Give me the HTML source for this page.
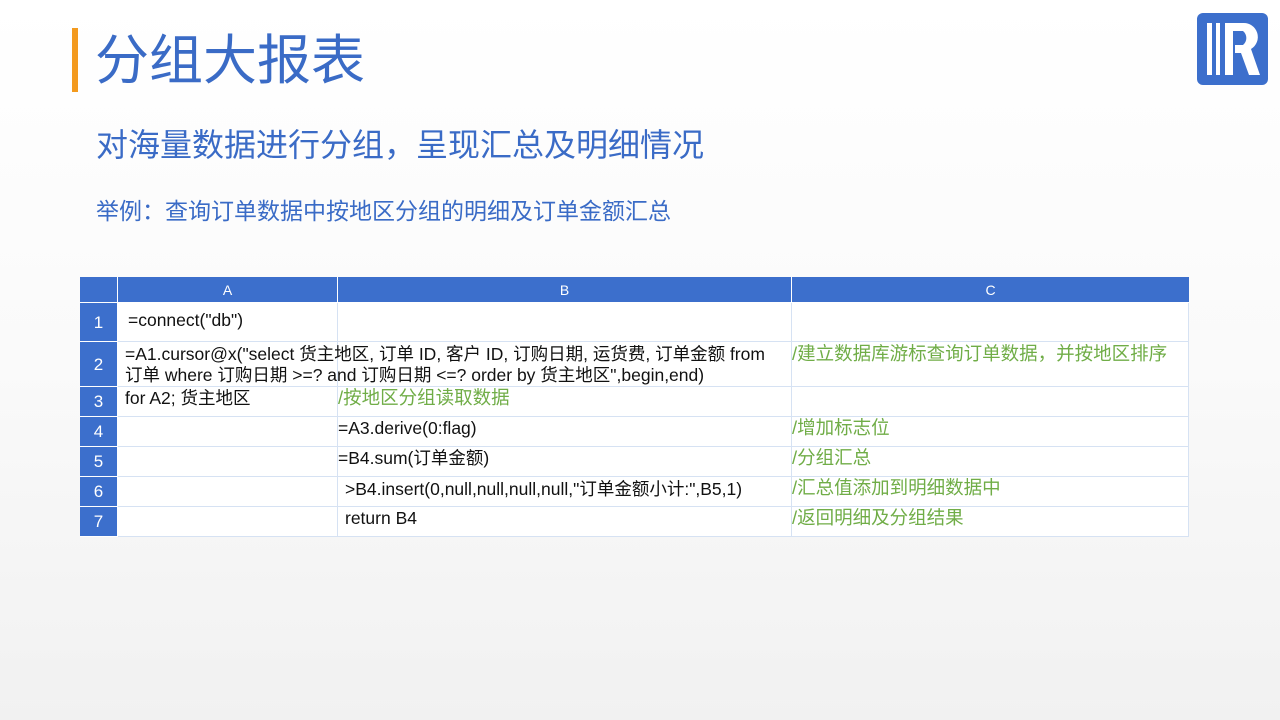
<!DOCTYPE html>
<html><head><meta charset="utf-8"><style>
*{margin:0;padding:0;box-sizing:border-box}
body{width:1280px;height:720px;overflow:hidden;position:relative;background:linear-gradient(180deg,#ffffff 0%,#fafafa 50%,#f1f1f1 100%);font-family:"Liberation Sans","Noto Sans CJK SC",sans-serif}
.a{position:absolute;white-space:nowrap}
.c{position:absolute;border-right:1px solid #d6e2f3;border-bottom:1px solid #d6e2f3;background:#fff}
.h{position:absolute;background:#3c6fcc;color:#fff;text-align:center;border-right:1px solid #fff;border-bottom:1px solid #fff;font-size:14px}
.t{position:absolute;font-size:17.5px;color:#111;white-space:nowrap;line-height:21px}
.g{color:#70ad47;font-size:18.5px}
</style></head><body>
<div class="a" style="left:72px;top:28px;width:6px;height:64px;background:#f39a1e"></div>
<div class="a" style="left:95px;top:28px;font-size:54px;color:#3a6bc6;line-height:66px">分组大报表</div>
<div class="a" style="left:96px;top:124px;font-size:32px;color:#3a6bc6;line-height:42px">对海量数据进行分组，呈现汇总及明细情况</div>
<div class="a" style="left:96px;top:196px;font-size:23px;color:#3a6bc6;line-height:30px">举例：查询订单数据中按地区分组的明细及订单金额汇总</div>
<svg class="a" style="left:1197px;top:13px" width="71" height="72" viewBox="0 0 71 72"><rect width="71" height="72" rx="6" fill="#3c6fcc"/><rect x="10" y="10" width="5" height="52" fill="#fff"/><rect x="19" y="10" width="4" height="52" fill="#fff"/><path d="M28 10h18a14 14 0 0 1 8 26l9 26h-11l-8-22h-6v-8h8a9 9 0 0 0 0-14h-10v44h-8z" fill="#fff"/></svg>
<div class="h" style="left:80px;top:277px;width:38px;height:26px"></div>
<div class="h" style="left:118px;top:277px;width:220px;height:26px;line-height:26px">A</div>
<div class="h" style="left:338px;top:277px;width:454px;height:26px;line-height:26px">B</div>
<div class="h" style="left:792px;top:277px;width:397px;height:26px;line-height:26px;border-right:none">C</div>
<div class="h" style="left:80px;top:303px;width:38px;height:39px;line-height:39px;font-size:17px">1</div>
<div class="h" style="left:80px;top:342px;width:38px;height:45px;line-height:45px;font-size:17px">2</div>
<div class="h" style="left:80px;top:387px;width:38px;height:30px;line-height:30px;font-size:17px">3</div>
<div class="h" style="left:80px;top:417px;width:38px;height:30px;line-height:30px;font-size:17px">4</div>
<div class="h" style="left:80px;top:447px;width:38px;height:30px;line-height:30px;font-size:17px">5</div>
<div class="h" style="left:80px;top:477px;width:38px;height:30px;line-height:30px;font-size:17px">6</div>
<div class="h" style="left:80px;top:507px;width:38px;height:30px;line-height:30px;font-size:17px">7</div>
<div class="c" style="left:118px;top:303px;width:220px;height:39px"></div><div class="c" style="left:338px;top:303px;width:454px;height:39px"></div><div class="c" style="left:792px;top:303px;width:397px;height:39px"></div>
<div class="c" style="left:118px;top:342px;width:220px;height:45px"></div><div class="c" style="left:338px;top:342px;width:454px;height:45px"></div><div class="c" style="left:792px;top:342px;width:397px;height:45px"></div>
<div class="c" style="left:118px;top:387px;width:220px;height:30px"></div><div class="c" style="left:338px;top:387px;width:454px;height:30px"></div><div class="c" style="left:792px;top:387px;width:397px;height:30px"></div>
<div class="c" style="left:118px;top:417px;width:220px;height:30px"></div><div class="c" style="left:338px;top:417px;width:454px;height:30px"></div><div class="c" style="left:792px;top:417px;width:397px;height:30px"></div>
<div class="c" style="left:118px;top:447px;width:220px;height:30px"></div><div class="c" style="left:338px;top:447px;width:454px;height:30px"></div><div class="c" style="left:792px;top:447px;width:397px;height:30px"></div>
<div class="c" style="left:118px;top:477px;width:220px;height:30px"></div><div class="c" style="left:338px;top:477px;width:454px;height:30px"></div><div class="c" style="left:792px;top:477px;width:397px;height:30px"></div>
<div class="c" style="left:118px;top:507px;width:220px;height:30px"></div><div class="c" style="left:338px;top:507px;width:454px;height:30px"></div><div class="c" style="left:792px;top:507px;width:397px;height:30px"></div>
<div class="t" style="left:128px;top:310px">=connect("db")</div>
<div class="t" style="left:125px;top:344px">=A1.cursor@x("select 货主地区, 订单 ID, 客户 ID, 订购日期, 运货费, 订单金额 from<br>订单 where 订购日期 &gt;=? and 订购日期 &lt;=? order by 货主地区",begin,end)</div>
<div class="t g" style="left:792px;top:343px">/建立数据库游标查询订单数据，并按地区排序</div>
<div class="t" style="left:125px;top:388px">for A2; 货主地区</div>
<div class="t g" style="left:338px;top:387px">/按地区分组读取数据</div>
<div class="t" style="left:338px;top:418px">=A3.derive(0:flag)</div>
<div class="t g" style="left:792px;top:417px">/增加标志位</div>
<div class="t" style="left:338px;top:448px">=B4.sum(订单金额)</div>
<div class="t g" style="left:792px;top:447px">/分组汇总</div>
<div class="t" style="left:345px;top:479px">&gt;B4.insert(0,null,null,null,null,"订单金额小计:",B5,1)</div>
<div class="t g" style="left:792px;top:477px">/汇总值添加到明细数据中</div>
<div class="t" style="left:345px;top:508px">return B4</div>
<div class="t g" style="left:792px;top:507px">/返回明细及分组结果</div>
</body></html>
